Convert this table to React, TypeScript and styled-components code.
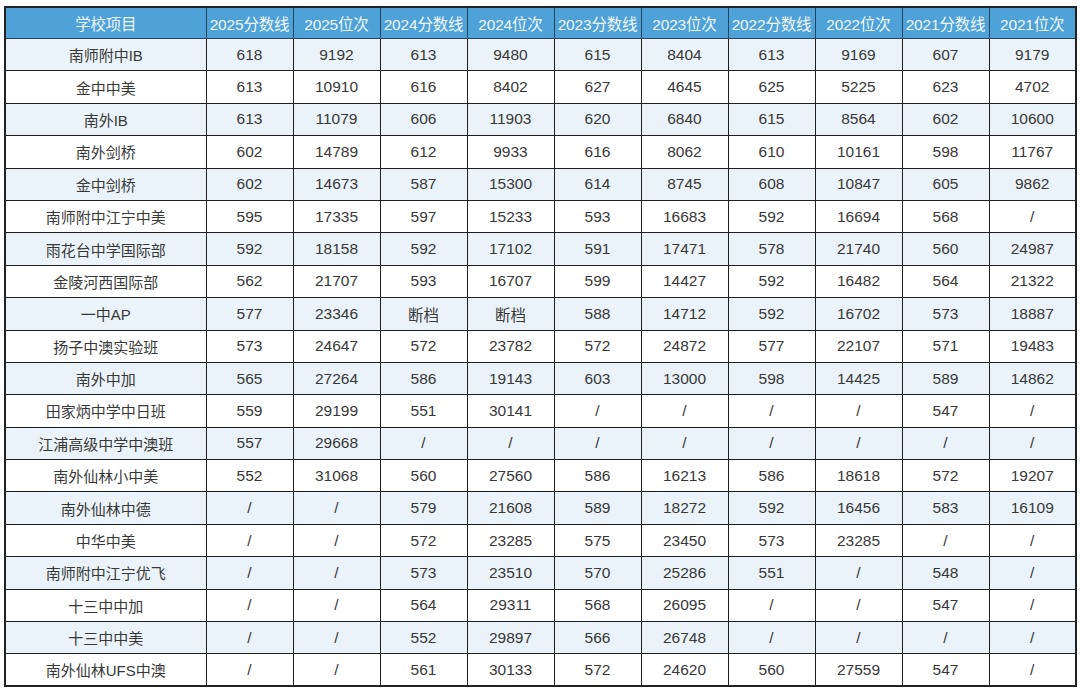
import React from "react";
import styled, { createGlobalStyle } from "styled-components";

const Global = createGlobalStyle`
  html, body { margin: 0; padding: 0; background: #ffffff; }
  body { font-family: "Liberation Sans", "Noto Sans CJK SC", sans-serif; }
`;

const Page = styled.div`
  padding: 6px 0 0 4px;
  width: 1080px;
  height: 691px;
  box-sizing: border-box;
  overflow: hidden;
`;

const Table = styled.table`
  border-collapse: collapse;
  table-layout: fixed;
  width: 1073px;
  border: 2px solid #222;
`;

const HeadCell = styled.th`
  height: 30px;
  padding: 0;
  background: #4ea2d7;
  color: #eef6fc;
  font-weight: normal;
  font-size: 15.5px;
  text-align: center;
  white-space: nowrap;
  border: 1.5px solid #24445c;
  border-top: none;
  letter-spacing: -0.2px;
`;

const Row = styled.tr<{ $striped: boolean }>`
  height: 32.4px;
  background: ${(p) => (p.$striped ? "#eaf3f9" : "#ffffff")};
`;

const NameCell = styled.td`
  padding: 0;
  text-align: center;
  color: #383838;
  font-size: 15px;
  white-space: nowrap;
  border: 1.5px solid #1f1f1f;
`;

const Cell = styled.td`
  padding: 0;
  text-align: center;
  color: #383838;
  font-size: 15.5px;
  white-space: nowrap;
  border: 1.5px solid #1f1f1f;
`;

const headers = [
  "学校项目",
  "2025分数线",
  "2025位次",
  "2024分数线",
  "2024位次",
  "2023分数线",
  "2023位次",
  "2022分数线",
  "2022位次",
  "2021分数线",
  "2021位次",
];

const rows: string[][] = [
  ["南师附中IB", "618", "9192", "613", "9480", "615", "8404", "613", "9169", "607", "9179"],
  ["金中中美", "613", "10910", "616", "8402", "627", "4645", "625", "5225", "623", "4702"],
  ["南外IB", "613", "11079", "606", "11903", "620", "6840", "615", "8564", "602", "10600"],
  ["南外剑桥", "602", "14789", "612", "9933", "616", "8062", "610", "10161", "598", "11767"],
  ["金中剑桥", "602", "14673", "587", "15300", "614", "8745", "608", "10847", "605", "9862"],
  ["南师附中江宁中美", "595", "17335", "597", "15233", "593", "16683", "592", "16694", "568", "/"],
  ["雨花台中学国际部", "592", "18158", "592", "17102", "591", "17471", "578", "21740", "560", "24987"],
  ["金陵河西国际部", "562", "21707", "593", "16707", "599", "14427", "592", "16482", "564", "21322"],
  ["一中AP", "577", "23346", "断档", "断档", "588", "14712", "592", "16702", "573", "18887"],
  ["扬子中澳实验班", "573", "24647", "572", "23782", "572", "24872", "577", "22107", "571", "19483"],
  ["南外中加", "565", "27264", "586", "19143", "603", "13000", "598", "14425", "589", "14862"],
  ["田家炳中学中日班", "559", "29199", "551", "30141", "/", "/", "/", "/", "547", "/"],
  ["江浦高级中学中澳班", "557", "29668", "/", "/", "/", "/", "/", "/", "/", "/"],
  ["南外仙林小中美", "552", "31068", "560", "27560", "586", "16213", "586", "18618", "572", "19207"],
  ["南外仙林中德", "/", "/", "579", "21608", "589", "18272", "592", "16456", "583", "16109"],
  ["中华中美", "/", "/", "572", "23285", "575", "23450", "573", "23285", "/", "/"],
  ["南师附中江宁优飞", "/", "/", "573", "23510", "570", "25286", "551", "/", "548", "/"],
  ["十三中中加", "/", "/", "564", "29311", "568", "26095", "/", "/", "547", "/"],
  ["十三中中美", "/", "/", "552", "29897", "566", "26748", "/", "/", "/", "/"],
  ["南外仙林UFS中澳", "/", "/", "561", "30133", "572", "24620", "560", "27559", "547", "/"],
];

export default function App() {
  return (
    <Page>
      <Global />
      <Table>
        <colgroup>
          <col style={{ width: 201 }} />
          {headers.slice(1).map((h) => (
            <col key={h} />
          ))}
        </colgroup>
        <thead>
          <tr>
            {headers.map((h) => (
              <HeadCell key={h}>{h}</HeadCell>
            ))}
          </tr>
        </thead>
        <tbody>
          {rows.map((r, i) => (
            <Row key={r[0]} $striped={i % 2 === 0}>
              <NameCell>{r[0]}</NameCell>
              {r.slice(1).map((v, j) => (
                <Cell key={j}>{v}</Cell>
              ))}
            </Row>
          ))}
        </tbody>
      </Table>
    </Page>
  );
}
